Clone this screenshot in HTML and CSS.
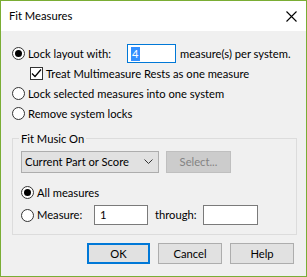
FILE: index.html
```html
<!DOCTYPE html>
<html>
  <head>
    <meta charset="utf-8">
    <title>Fit Measures</title>
    <link rel="stylesheet" href="styles.css">
  </head>
  <body>
  <div class="dialog">
    <header class="titlebar">
      <span class="title">Fit Measures</span>
      <svg class="close" width="11" height="11" viewBox="0 0 11 11">
        <path d="M0.5 0.5 L10.5 10.5 M10.5 0.5 L0.5 10.5" stroke="#000" stroke-width="1.1" fill="none"/>
      </svg>
    </header>
    <main class="content">
      <div class="row row--first">
        <span class="radio radio--on"></span>
        <span class="lbl lbl--lock">Lock layout with:</span>
        <span class="field field--focus"><span class="sel">4</span></span>
        <span class="lbl lbl--after">measure(s) per system.</span>
      </div>
      <div class="row row--check">
        <span class="check">
          <svg width="11" height="11" viewBox="0 0 11 11"><path d="M1 5.5 L4 8.5 L10 1.5" stroke="#000" stroke-width="1.2" fill="none"/></svg>
        </span>
        <span class="lbl">Treat Multimeasure Rests as one measure</span>
      </div>
      <div class="row row--option">
        <span class="radio"></span>
        <span class="lbl">Lock selected measures into one system</span>
      </div>
      <div class="row row--option">
        <span class="radio"></span>
        <span class="lbl">Remove system locks</span>
      </div>

      <section class="group">
        <span class="legend">Fit Music On</span>
        <div class="row row--combo">
          <span class="combo">
            <span>Current Part or Score</span>
            <svg width="9" height="6" viewBox="0 0 9 6"><path d="M0.5 0.5 L4.5 4.5 L8.5 0.5" stroke="#333" stroke-width="1" fill="none"/></svg>
          </span>
          <span class="btn btn--disabled">Select...</span>
        </div>
        <div class="row row--all">
          <span class="radio radio--on"></span>
          <span class="lbl">All measures</span>
        </div>
        <div class="row row--range">
          <span class="radio"></span>
          <span class="lbl lbl--measure">Measure:</span>
          <span class="field field--from">1</span>
          <span class="lbl lbl--through">through:</span>
          <span class="field field--to"></span>
        </div>
      </section>

      <div class="buttons">
        <span class="btn btn--ok">OK</span>
        <span class="btn">Cancel</span>
        <span class="btn">Help</span>
      </div>
    </main>
  </div>
  </body>
</html>
```

FILE: styles.css
```css
* {
  box-sizing: border-box;
  margin: 0;
}

body {
  margin: 0;
  font-family: Lato, "Noto Sans", sans-serif;
  font-size: 11.2px;
  color: #000;
}

.dialog {
  width: 307px;
  height: 277px;
  border: 1px solid #7aad34;
  background: #f0f0f0;
  display: flex;
  flex-direction: column;
}

.titlebar {
  height: 30px;
  background: #fff;
  display: flex;
  align-items: center;
  justify-content: space-between;
  padding: 0 9px 0 8px;
}

.title {
  line-height: 16px;
}

.close {
  display: block;
  margin-top: 1px;
}

.content {
  flex: 1;
  padding: 13px 12px 0 11px;
  display: flex;
  flex-direction: column;
}

.row {
  display: flex;
  align-items: center;
  line-height: 16px;
  white-space: nowrap;
}

.row--first {
  height: 19px;
}

.row--check {
  height: 13px;
  margin-top: 4px;
  padding-left: 18px;
}

.row--option {
  height: 13px;
  margin-top: 7px;
}

.radio {
  width: 13px;
  height: 13px;
  border: 1px solid #333;
  border-radius: 50%;
  background: #fff;
  flex: none;
  margin-right: 3px;
  display: flex;
  align-items: center;
  justify-content: center;
}

.radio--on::after {
  content: "";
  width: 7px;
  height: 7px;
  border-radius: 50%;
  background: #000;
}

.check {
  width: 13px;
  height: 13px;
  border: 1px solid #333;
  background: #fff;
  flex: none;
  margin-right: 3px;
  display: flex;
  align-items: center;
  justify-content: center;
}

.check svg {
  display: block;
}

.lbl--lock {
  width: 99px;
}

.lbl--after {
  margin-left: 4px;
}

.field {
  height: 19px;
  background: #fff;
  border: 1px solid #7a7a7a;
  display: flex;
  align-items: center;
  flex: none;
}

.field--focus {
  width: 49px;
  border-color: #0078d7;
  padding-left: 3px;
}

.sel {
  background: #3390ff;
  color: #fff;
  padding: 0 1px;
  line-height: 14px;
}

.group {
  margin-top: 18px;
  width: 285px;
  height: 97px;
  border: 1px solid #dcdcdc;
  display: flex;
  flex-direction: column;
}

.legend {
  align-self: flex-start;
  margin: -8px 0 0 6px;
  padding: 0 2px;
  line-height: 16px;
  background: #f0f0f0;
}

.row--combo {
  margin-top: 4px;
  padding-left: 8px;
}

.combo {
  width: 138px;
  height: 22px;
  background: #e1e1e1;
  border: 1px solid #adadad;
  display: flex;
  align-items: center;
  justify-content: space-between;
  padding: 0 5px 0 3px;
}

.combo svg {
  display: block;
}

.btn {
  height: 21px;
  width: 64px;
  background: #e1e1e1;
  border: 1px solid #adadad;
  display: flex;
  align-items: center;
  justify-content: center;
  flex: none;
}

.btn--disabled {
  width: 65px;
  height: 22px;
  margin-left: 7px;
  background: #cccccc;
  border-color: #bfbfbf;
  color: #838383;
}

.row--all {
  height: 13px;
  margin-top: 13px;
  padding-left: 8px;
}

.row--range {
  height: 20px;
  margin-top: 6px;
  padding-left: 8px;
}

.lbl--measure {
  width: 57px;
}

.field--from {
  width: 54px;
  height: 20px;
  padding-left: 5px;
}

.lbl--through {
  margin-left: 7px;
  width: 48px;
}

.field--to {
  width: 55px;
  height: 20px;
}

.buttons {
  margin-top: 8px;
  display: flex;
  justify-content: flex-end;
  gap: 8px;
}

.btn--ok {
  width: 63px;
  border: 2px solid #0078d7;
}
```
